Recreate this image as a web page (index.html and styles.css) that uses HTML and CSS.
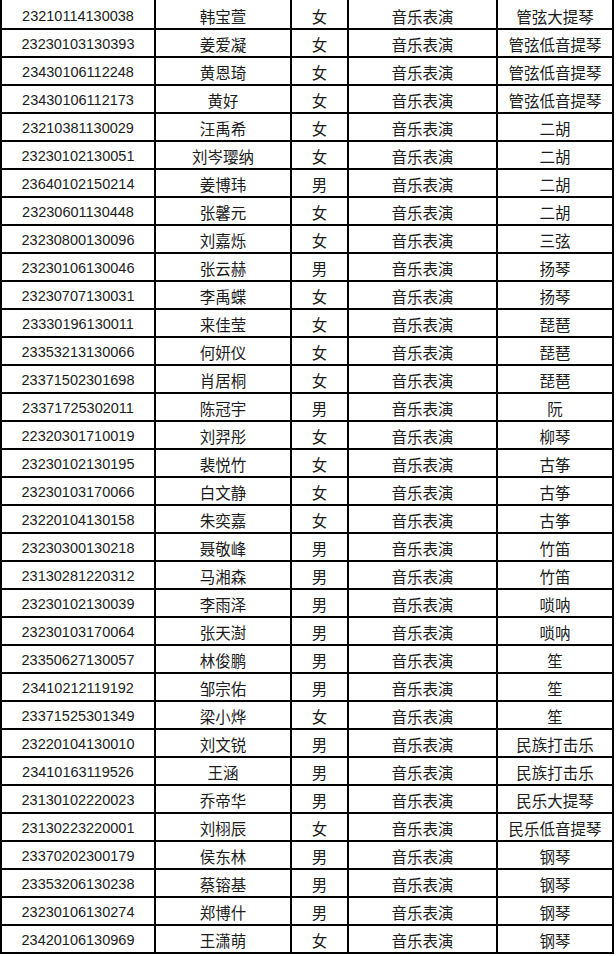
FILE: index.html
```html
<!DOCTYPE html>
<html lang="zh-CN">
<head>
<meta charset="utf-8">
<title>名单</title>
<link rel="stylesheet" href="styles.css">
</head>
<body>
<div class="sheet">
<div class="c id">23210114130038</div><div class="c zh">韩宝萱</div><div class="c zh">女</div><div class="c zh">音乐表演</div><div class="c zh">管弦大提琴</div>
<div class="c id">23230103130393</div><div class="c zh">姜爱凝</div><div class="c zh">女</div><div class="c zh">音乐表演</div><div class="c zh">管弦低音提琴</div>
<div class="c id">23430106112248</div><div class="c zh">黄恩琦</div><div class="c zh">女</div><div class="c zh">音乐表演</div><div class="c zh">管弦低音提琴</div>
<div class="c id">23430106112173</div><div class="c zh">黄好</div><div class="c zh">女</div><div class="c zh">音乐表演</div><div class="c zh">管弦低音提琴</div>
<div class="c id">23210381130029</div><div class="c zh">汪禹希</div><div class="c zh">女</div><div class="c zh">音乐表演</div><div class="c zh">二胡</div>
<div class="c id">23230102130051</div><div class="c zh">刘岑璎纳</div><div class="c zh">女</div><div class="c zh">音乐表演</div><div class="c zh">二胡</div>
<div class="c id">23640102150214</div><div class="c zh">姜博玮</div><div class="c zh">男</div><div class="c zh">音乐表演</div><div class="c zh">二胡</div>
<div class="c id">23230601130448</div><div class="c zh">张馨元</div><div class="c zh">女</div><div class="c zh">音乐表演</div><div class="c zh">二胡</div>
<div class="c id">23230800130096</div><div class="c zh">刘嘉烁</div><div class="c zh">女</div><div class="c zh">音乐表演</div><div class="c zh">三弦</div>
<div class="c id">23230106130046</div><div class="c zh">张云赫</div><div class="c zh">男</div><div class="c zh">音乐表演</div><div class="c zh">扬琴</div>
<div class="c id">23230707130031</div><div class="c zh">李禹蝶</div><div class="c zh">女</div><div class="c zh">音乐表演</div><div class="c zh">扬琴</div>
<div class="c id">23330196130011</div><div class="c zh">来佳莹</div><div class="c zh">女</div><div class="c zh">音乐表演</div><div class="c zh">琵琶</div>
<div class="c id">23353213130066</div><div class="c zh">何妍仪</div><div class="c zh">女</div><div class="c zh">音乐表演</div><div class="c zh">琵琶</div>
<div class="c id">23371502301698</div><div class="c zh">肖居桐</div><div class="c zh">女</div><div class="c zh">音乐表演</div><div class="c zh">琵琶</div>
<div class="c id">23371725302011</div><div class="c zh">陈冠宇</div><div class="c zh">男</div><div class="c zh">音乐表演</div><div class="c zh">阮</div>
<div class="c id">22320301710019</div><div class="c zh">刘羿彤</div><div class="c zh">女</div><div class="c zh">音乐表演</div><div class="c zh">柳琴</div>
<div class="c id">23230102130195</div><div class="c zh">裴悦竹</div><div class="c zh">女</div><div class="c zh">音乐表演</div><div class="c zh">古筝</div>
<div class="c id">23230103170066</div><div class="c zh">白文静</div><div class="c zh">女</div><div class="c zh">音乐表演</div><div class="c zh">古筝</div>
<div class="c id">23220104130158</div><div class="c zh">朱奕嘉</div><div class="c zh">女</div><div class="c zh">音乐表演</div><div class="c zh">古筝</div>
<div class="c id">23230300130218</div><div class="c zh">聂敬峰</div><div class="c zh">男</div><div class="c zh">音乐表演</div><div class="c zh">竹笛</div>
<div class="c id">23130281220312</div><div class="c zh">马湘森</div><div class="c zh">男</div><div class="c zh">音乐表演</div><div class="c zh">竹笛</div>
<div class="c id">23230102130039</div><div class="c zh">李雨泽</div><div class="c zh">男</div><div class="c zh">音乐表演</div><div class="c zh">唢呐</div>
<div class="c id">23230103170064</div><div class="c zh">张天澍</div><div class="c zh">男</div><div class="c zh">音乐表演</div><div class="c zh">唢呐</div>
<div class="c id">23350627130057</div><div class="c zh">林俊鹏</div><div class="c zh">男</div><div class="c zh">音乐表演</div><div class="c zh">笙</div>
<div class="c id">23410212119192</div><div class="c zh">邹宗佑</div><div class="c zh">男</div><div class="c zh">音乐表演</div><div class="c zh">笙</div>
<div class="c id">23371525301349</div><div class="c zh">梁小烨</div><div class="c zh">女</div><div class="c zh">音乐表演</div><div class="c zh">笙</div>
<div class="c id">23220104130010</div><div class="c zh">刘文锐</div><div class="c zh">男</div><div class="c zh">音乐表演</div><div class="c zh">民族打击乐</div>
<div class="c id">23410163119526</div><div class="c zh">王涵</div><div class="c zh">男</div><div class="c zh">音乐表演</div><div class="c zh">民族打击乐</div>
<div class="c id">23130102220023</div><div class="c zh">乔帝华</div><div class="c zh">男</div><div class="c zh">音乐表演</div><div class="c zh">民乐大提琴</div>
<div class="c id">23130223220001</div><div class="c zh">刘栩辰</div><div class="c zh">女</div><div class="c zh">音乐表演</div><div class="c zh">民乐低音提琴</div>
<div class="c id">23370202300179</div><div class="c zh">侯东林</div><div class="c zh">男</div><div class="c zh">音乐表演</div><div class="c zh">钢琴</div>
<div class="c id">23353206130238</div><div class="c zh">蔡镕基</div><div class="c zh">男</div><div class="c zh">音乐表演</div><div class="c zh">钢琴</div>
<div class="c id">23230106130274</div><div class="c zh">郑博什</div><div class="c zh">男</div><div class="c zh">音乐表演</div><div class="c zh">钢琴</div>
<div class="c id">23420106130969</div><div class="c zh">王潇萌</div><div class="c zh">女</div><div class="c zh">音乐表演</div><div class="c zh">钢琴</div>
</div>
</body>
</html>
```
FILE: styles.css
```css
html, body {
  margin: 0;
  padding: 0;
  background: #ffffff;
}
.sheet {
  display: grid;
  grid-template-columns: 152px 134px 55px 147px 114px;
  grid-template-rows: 28px repeat(33, 26px);
  gap: 2px;
  padding: 0 2px 2px 2px;
  width: 610px;
  background: #000000;
}
.c {
  background: #ffffff;
  display: flex;
  align-items: center;
  justify-content: center;
  color: #1c1c1c;
  white-space: nowrap;
  padding-top: 1px;
  box-sizing: border-box;
}
.c:nth-child(-n+5) {
  padding-top: 3px;
}
.id {
  font-family: "Liberation Sans", Arial, sans-serif;
  font-size: 14.5px;
}
.zh {
  font-family: "Noto Sans CJK SC", "Noto Sans", sans-serif;
  font-size: 15.5px;
}
```
